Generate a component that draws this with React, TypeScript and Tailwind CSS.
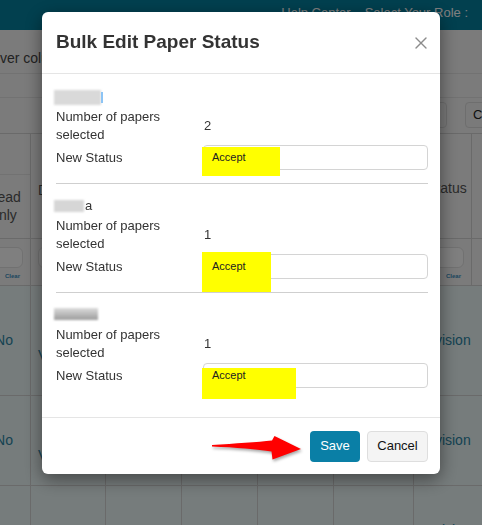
import { X } from "lucide-react";

const sections = [
  { count: 2, mark: "top-[2px] h-[29px] w-[78px]", name: 1 },
  { count: 1, mark: "-top-[2px] h-[40px] w-[69px]", name: 2 },
  { count: 1, mark: "top-[5px] h-[31px] w-[94px]", name: 3 },
];

// blurred reviewer names, as in the screenshot
const BlurredName = ({ variant }: { variant: number }) => {
  if (variant === 1) {
    return (
      <div className="flex h-[20px] items-start pt-[2px] -ml-[2px]">
        <span className="h-[15px] w-[47px] bg-[#d9d9d9] blur-[1px]" />
        <span className="mt-[2px] h-[11px] w-[2px] bg-[#8cc4f5] blur-[0.7px]" />
      </div>
    );
  }
  if (variant === 2) {
    return (
      <div className="flex h-[20px] items-start pt-[3px] -ml-[2px]">
        <span className="h-[12px] w-[30px] bg-[#d6d6d6] blur-[1px]" />
        <span className="-mt-[4px] ml-[1px] text-[13px] text-[#333]">a</span>
      </div>
    );
  }
  return (
    <div className="flex h-[20px] items-start pt-[2px] -ml-[2px]">
      <span className="h-[12px] w-[44px] bg-gradient-to-b from-[#dcdcdc] to-[#9c9c9c] blur-[1px]" />
    </div>
  );
};

const Section = ({ count, mark, name, last }: { count: number; mark: string; name: number; last: boolean }) => (
  <>
    <div className="pb-[13px]">
      <BlurredName variant={name} />
      <div className="flex items-center">
        <div className="w-[147px] text-[13px] leading-[18px] text-[#333]">Number of papers selected</div>
        <div className="pl-[1px] text-[13px] text-[#333]">{count}</div>
      </div>
      <div className="mt-[1px] flex items-center">
        <div className="w-[147px] text-[13px] text-[#333]">New Status</div>
        <div className="relative h-[25px] flex-1">
          <div className="h-full rounded-[4px] border border-[#d4d4d4] bg-white" />
          <div className={`absolute -left-[1px] bg-[#ffff00] ${mark}`} />
          <span className="absolute left-[9px] top-0 flex h-full items-center text-[11px] text-[#222]">Accept</span>
        </div>
      </div>
    </div>
    {!last && <hr className="mb-[13px] border-t border-[#cfcfcf]" />}
  </>
);

const RedArrow = () => (
  <svg
    width="96"
    height="30"
    viewBox="0 0 96 30"
    className="absolute left-[168px] top-[16px] drop-shadow-[1px_2px_1.5px_rgba(0,0,0,0.35)]"
  >
    <path
      d="M2 11 C 25 9.5, 48 8, 62 6.5 L 64.5 2 L 91 15 L 62.5 25.5 L 61.5 17.5 C 48 15.5, 25 13.5, 2 12.6 Z"
      fill="#ff0000"
    />
  </svg>
);

const Modal = () => (
  <div className="h-fit w-[398px] rounded-[6px] bg-white shadow-[0_5px_18px_rgba(0,0,0,0.45)]">
    <div className="flex h-[62px] items-center justify-between border-b border-[#e5e5e5] pl-[14px] pr-[12px]">
      <h4 className="text-[19px] font-bold text-[#333]">Bulk Edit Paper Status</h4>
      <X size={20} strokeWidth={1.6} className="-mr-[3px] text-[#8c8c8c]" />
    </div>
    <div className="pb-[16px] pl-[14px] pr-[12px] pt-[14px]">
      {sections.map((s, i) => (
        <Section key={i} count={s.count} mark={s.mark} name={s.name} last={i === sections.length - 1} />
      ))}
    </div>
    <div className="relative flex h-[57px] items-center justify-end gap-[7px] border-t border-[#e5e5e5] pr-[12px]">
      <RedArrow />
      <button className="relative h-[31px] w-[50px] rounded-[4px] bg-[#0a7fa6] text-[13px] text-white">Save</button>
      <button className="h-[31px] w-[61px] rounded-[4px] border border-[#dedede] bg-[#f4f4f4] text-[13px] text-[#111]">
        Cancel
      </button>
    </div>
  </div>
);

const cols = "grid grid-cols-[53px_75px_76px_76px_76px_80px_58px_80px]";
const cell = "border-r border-[#d4d4d4]";

const FilterCell = () => (
  <div className={`${cell} flex flex-col`}>
    <div className="mx-[7px] mt-[8px] h-[21px] rounded-[6px] border border-[#e2e2e2] bg-white" />
    <span className="mt-[4px] pr-[10px] text-right text-[6px] font-bold text-[#3a8fbf]">Clear</span>
  </div>
);

const BodyRow = ({ height }: { height: string }) => (
  <div className={`${cols} ${height} border-b border-[#d4d4d4] bg-[#edf8f8] text-[14px] text-[#2a86a6]`}>
    <div className={`${cell} flex items-center justify-center`}>No</div>
    <div className={`${cell} flex items-center pl-[7px] pt-[30px]`}>View</div>
    <div className={cell} />
    <div className={cell} />
    <div className={cell} />
    <div className={cell} />
    <div className="col-span-2 flex items-center pl-[3px]">Revision</div>
  </div>
);

const BackgroundPage = () => (
  <div className="text-[#444]">
    <div className="flex h-[30px] justify-end gap-[14px] bg-[#04809f] pr-[14px] pt-[5px] text-[13px] leading-[15px] text-white">
      <span>Help Center</span>
      <span>Select Your Role :</span>
    </div>
    <div className="h-[44px] border-b border-[#e4e4e4] pt-[20px] text-[14px] leading-[16px]">ver columns to reorder</div>
    <div className="h-[24px] border-b border-[#e4e4e4]" />
    <div className="flex h-[36px] gap-[18px] border-b border-[#d4d4d4] pl-[380px] pt-[4px]">
      <div className="h-[26px] w-[67px] shrink-0 rounded-[4px] border border-[#dcdcdc] bg-[#f4f4f4]" />
      <div className="flex h-[26px] w-[90px] shrink-0 items-center whitespace-nowrap rounded-[4px] border border-[#dcdcdc] bg-[#f4f4f4] pl-[7px] text-[13px] text-[#222]">
        Clear All
      </div>
    </div>
    <div className="-ml-[22px]">
      <div className={`${cols} h-[105px] border-b border-[#d4d4d4] text-[14px] text-[#555]`}>
        <div className={`${cell} flex flex-col`}>
          <div className="h-[41px] border-b border-[#e4e4e4]" />
          <div className="flex flex-1 items-center justify-center pb-[2px] text-center leading-[18px]">
            Read
            <br />
            only
          </div>
        </div>
        <div className={`${cell} pl-[7px] pt-[46px]`}>Date</div>
        <div className={cell} />
        <div className={cell} />
        <div className={cell} />
        <div className={cell} />
        <div className={`${cell} pl-[13px] pt-[44px]`}>Status</div>
        <div />
      </div>
      <div className={`${cols} h-[47px] border-b border-[#d4d4d4]`}>
        <FilterCell />
        <FilterCell />
        <FilterCell />
        <FilterCell />
        <FilterCell />
        <FilterCell />
        <FilterCell />
        <div />
      </div>
      <BodyRow height="h-[110px]" />
      <BodyRow height="h-[90px]" />
      <BodyRow height="h-[90px]" />
    </div>
  </div>
);

export default function App() {
  return (
    <div className="relative h-[525px] w-full overflow-hidden bg-[#f6f6f6] font-['Liberation_Sans',Arial,sans-serif]">
      <BackgroundPage />
      <div className="fixed inset-0 bg-black/50" />
      <div className="fixed inset-0 flex justify-center pt-[12px]">
        <Modal />
      </div>
    </div>
  );
}
